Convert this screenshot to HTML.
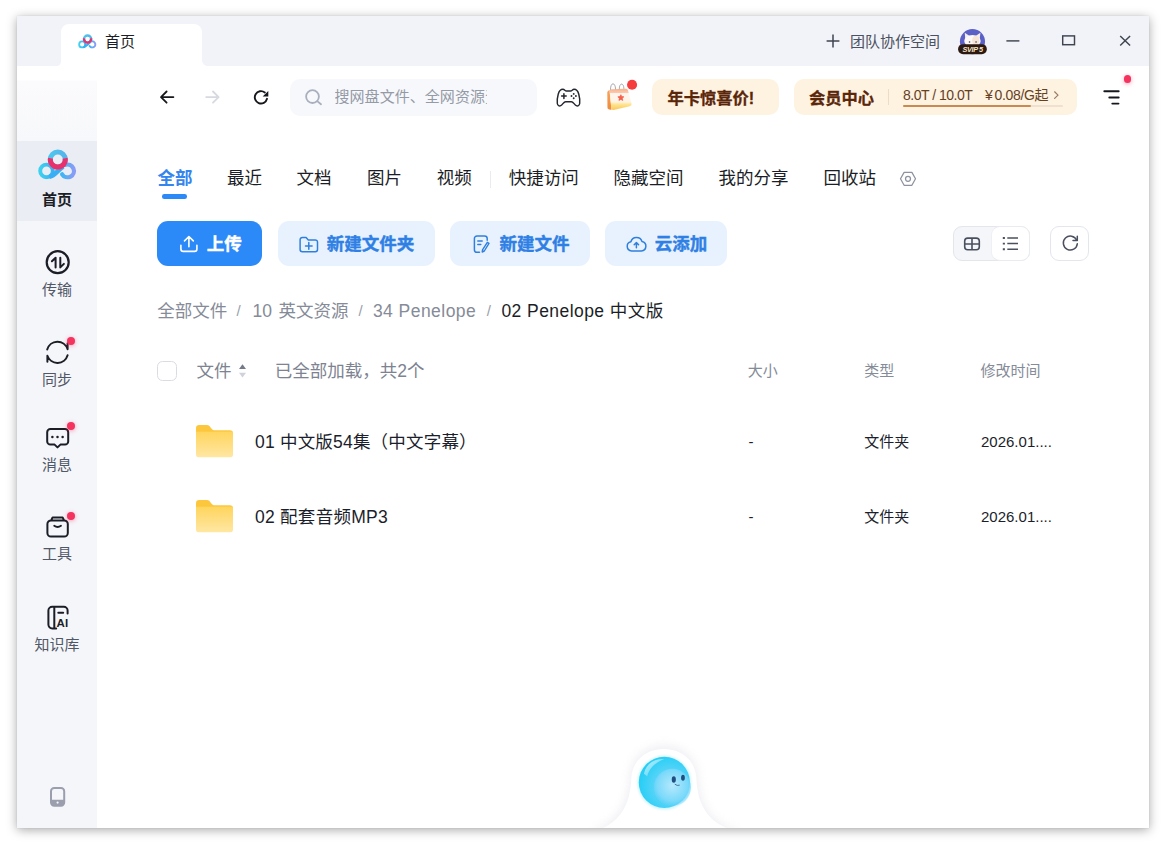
<!DOCTYPE html>
<html lang="zh-CN">
<head>
<meta charset="utf-8">
<title>首页</title>
<style>
*{box-sizing:border-box;margin:0;padding:0}
html,body{width:1169px;height:850px;overflow:hidden;background:#fff}
body{font-family:"Liberation Sans","Noto Sans CJK SC",sans-serif;color:#1b1e26;position:relative}
.abs{position:absolute}
svg{position:absolute;overflow:visible}
#win{position:absolute;left:17px;top:16px;width:1132px;height:812px;background:#fff;box-shadow:0 0 1px rgba(0,0,0,.12),0 1.500px 10px rgba(0,0,0,.34)}
#titlebar{position:absolute;left:0;top:0;width:1132px;height:49.600px;background:#f2f3f8}
#tab{position:absolute;left:43.800px;top:8px;width:141.200px;height:41.600px;background:#fff;border-radius:8px 8px 0 0}
#tab:before,#tab:after{content:"";position:absolute;bottom:0;width:6px;height:6px}
#tab:before{left:-2.500px;width:2.500px;height:2.500px;background:radial-gradient(circle at 0 0,transparent 2px,#fff 3px)}
#tab:after{right:-6px;background:radial-gradient(circle at 100% 0,transparent 5.5px,#fff 6.5px)}
#side{position:absolute;left:0;top:49.600px;width:80px;height:762.400px;background:linear-gradient(#fff 0,#fff 14px,#fbfbfd 15px,#f7f8fb 75px,#f5f6fa 76px,#f5f6fa 100%)}
.t{position:absolute;white-space:nowrap;line-height:20px;height:20px}
.sel{position:absolute;left:0;top:75px;width:80px;height:80px;background:#ebedf4}
.slabel{position:absolute;left:0;width:80px;text-align:center;font-size:15px;line-height:20px;color:#505766}
.dot{position:absolute;width:7.800px;height:7.800px;margin-top:.4px;border-radius:50%;background:#f4335f;box-shadow:0 1px 4px rgba(244,51,95,.45)}
.nav{top:150.600px;font-size:17.500px;line-height:22px;height:22px;color:#1b1e26}
.btn{top:205px;height:45px;border-radius:11px;background:#e8f2fe}
.bt{top:217px;font-size:17.500px;line-height:22px;height:22px;font-weight:700;color:#2f80e4;-webkit-text-stroke:.4px}
.cr{top:284.100px;font-size:17.500px;line-height:22px;height:22px;color:#858b98}
.sl{color:#9aa0ac;font-size:15px}
.hd{top:344.100px;font-size:17.500px;line-height:22px;height:22px;color:#7d8391}
.ch{top:344.500px;font-size:15px;line-height:20px;height:20px;color:#858b98}
.nm{font-size:17.500px;line-height:22px;height:22px;color:#1b1e2b}
.cl{font-size:15px;line-height:20px;height:20px;color:#1b1e2b}
</style>
</head>
<body>
<svg width="0" height="0" style="left:0;top:0">
  <defs>
    <linearGradient id="gR" x1="0" y1="0" x2="1" y2="0"><stop offset="0" stop-color="#3fb6f4"/><stop offset="1" stop-color="#8a9cf5"/></linearGradient>
    <linearGradient id="gL" x1="0" y1="0" x2="1" y2="0"><stop offset="0" stop-color="#3fd0ef"/><stop offset="1" stop-color="#3ab2f2"/></linearGradient>
    <linearGradient id="gT" x1="0" y1="0" x2="1" y2="0"><stop offset="0" stop-color="#4cc6ee"/><stop offset="1" stop-color="#55b4ea"/></linearGradient>
    <linearGradient id="gF" x1="0" y1="0" x2="0" y2="1"><stop offset="0" stop-color="#ffd55e"/><stop offset="1" stop-color="#ffe7a4"/></linearGradient>
    <symbol id="folder" viewBox="0 0 37 32.400">
      <path d="M0 3.200 A3.200 3.200 0 0 1 3.200 0 H10.800 C13 0 13.600 1.200 15 2.900 C16.200 4.400 17 5.200 19.200 5.200 H33.800 A3.200 3.200 0 0 1 37 8.400 V12 H0 Z" fill="#fcc73c"/>
      <path d="M0 6.800 H37 V29.200 A3.200 3.200 0 0 1 33.800 32.400 H3.200 A3.200 3.200 0 0 1 0 29.200 Z" fill="url(#gF)"/>
      <path d="M0 3.200 A3.200 3.200 0 0 1 3.200 0 H10.800 C13 0 13.600 1.200 15 2.900 C16.200 4.400 17 5.200 19.200 5.200 H33.800 A3.200 3.200 0 0 1 37 8.400 V12 H0 Z" fill="#fcc73c" opacity="0"/>
    </symbol>
    <symbol id="logo" viewBox="0 0 38.7 30.6">
      <circle cx="8.5" cy="21.9" r="6.3" fill="none" stroke="url(#gL)" stroke-width="3.9"/>
      <path d="M11.5 27.7 C17.5 26.6 19 21.5 25.2 17.6" fill="none" stroke="#3aaef3" stroke-width="4.6"/>
      <path d="M24.1 25.3 A6.4 6.4 0 1 0 27.3 15.9" fill="none" stroke="url(#gR)" stroke-width="4.2" stroke-linecap="round"/>
      <circle cx="19.8" cy="10.6" r="7.5" fill="none" stroke="url(#gT)" stroke-width="5"/>
      <path d="M27.16 9.17 A7.5 7.5 0 1 1 12.44 9.17" fill="none" stroke="#e8316c" stroke-width="5"/>
    </symbol>
  </defs>
</svg>
<div id="win">
  <!-- ============ TITLE BAR ============ -->
  <div id="titlebar">
    <div id="tab"></div>
    <svg style="left:61px;top:17.6px" width="18.7" height="14.6"><use href="#logo" width="18.7" height="14.6"/></svg>
    <div class="t" style="left:88px;top:16px;font-size:15px;color:#1b1e26">首页</div>
    <svg style="left:0;top:0" width="1132" height="50" fill="none" stroke="#3f444f" stroke-width="1.450">
      <path d="M809.600 25 H822.400 M816 18.600 V31.400" stroke-width="1.500"/>
      <path d="M989.400 24.900 H1002.400"/>
      <rect x="1045.700" y="19.900" width="11.800" height="8.800"/>
      <path d="M1103.200 19.900 L1113.100 29.600 M1113.100 19.900 L1103.200 29.600"/>
    </svg>
    <!-- avatar -->
    <svg style="left:928px;top:4px" width="60" height="40" viewBox="0 0 1169 779">
      <circle cx="535" cy="420" r="245" fill="#5b60c6"/>
      <path d="M395 380 L385 250 L480 310 Z M675 380 L690 250 L595 310 Z" fill="#f3ece8"/>
      <ellipse cx="535" cy="410" rx="160" ry="120" fill="#fbf8f6"/>
      <ellipse cx="600" cy="400" rx="70" ry="95" fill="#f3dccb" opacity=".7"/>
      <circle cx="478" cy="428" r="16" fill="#3a3f55"/><circle cx="605" cy="428" r="16" fill="#3a3f55"/>
      <rect x="255" y="470" width="560" height="197" rx="97" fill="#2c1a12"/>
      <text x="540" y="618" text-anchor="middle" font-family="Liberation Sans, sans-serif" font-weight="700" font-style="italic" font-size="142" letter-spacing="-7" fill="#f8e4c6">SVIP 5</text>
    </svg>
    <div class="t" style="left:833px;top:16px;font-size:15px;color:#4a5160">团队协作空间</div>
  </div>
  <!-- ============ SIDEBAR ============ -->
  <div id="side">
    <div class="sel"></div>
    <svg style="left:20.6px;top:83.4px" width="38.7" height="30.6"><use href="#logo" width="38.7" height="30.6"/></svg>
    <!-- transfer -->
    <svg style="left:0;top:0" width="80" height="762" fill="none" stroke="#1b1e26" stroke-width="2.1" stroke-linecap="round" stroke-linejoin="round">
      <circle cx="40.7" cy="196.2" r="11" stroke-width="2.2"/>
      <path d="M34.9 195.2 L38.6 191.7 V201.4 M43.3 191.7 V201.4 L46.9 197.9" stroke-width="2"/>
      <!-- sync -->
      <path d="M30.2 283.6 A10.6 10.6 0 0 1 50.6 283.2 V277.2 M50.6 289.2 A10.6 10.6 0 0 1 30.4 289.8 V295.8" stroke-width="2"/>
      <!-- message -->
      <path d="M33.4 363 H48 A3.2 3.2 0 0 1 51.2 366.2 V375.4 A3.2 3.2 0 0 1 48 378.6 H43.4 L40.5 381.4 L37.6 378.6 H33.4 A3.2 3.2 0 0 1 30.2 375.4 V366.2 A3.2 3.2 0 0 1 33.4 363 Z" stroke-width="2"/>
      <g fill="#1b1e26" stroke="none"><circle cx="35.4" cy="370.9" r="1.25"/><circle cx="40.5" cy="370.9" r="1.25"/><circle cx="45.6" cy="370.9" r="1.25"/></g>
      <!-- tools -->
      <path d="M34 454.4 H47.2 A3.6 3.6 0 0 1 50.8 458 V467 A3.6 3.6 0 0 1 47.200 470.6 H34 A3.6 3.6 0 0 1 30.4 467 V458 A3.6 3.600 0 0 1 34 454.400 Z M34.200 454.200 L35.600 451.400 H45.600 L47 454.200" stroke-width="2"/>
      <path d="M37.2 459.800 Q40.600 462.200 44 459.800" stroke-width="1.800"/>
      <!-- knowledge -->
      <path d="M50.600 547.600 V544.600 A3.800 3.800 0 0 0 46.800 540.800 H35.200 A3.800 3.800 0 0 0 31.400 544.600 V558.600 A3.800 3.800 0 0 0 35.200 562.400 H39.200 M37.300 540.800 V562.400 M41.300 546.700 H46.200" stroke-width="2"/>
    </svg>
    <div class="abs" style="left:39.400px;top:552.300px;width:14px;font:700 11.500px/11px 'Liberation Sans',sans-serif;color:#1b1e26;letter-spacing:.2px">AI</div>
    <div class="dot" style="left:50.1px;top:270.900px"></div>
    <div class="dot" style="left:49.9px;top:356.300px"></div>
    <div class="dot" style="left:49.9px;top:446.300px"></div>
    <!-- phone -->
    <svg style="left:32.900px;top:721.100px" width="15.2" height="19.800">
      <rect x="1" y="1" width="13.200" height="17.800" rx="3.200" fill="none" stroke="#9b9fad" stroke-width="2"/>
      <path d="M1 12.700 H14.200 V15.600 A3.200 3.200 0 0 1 11 18.800 H4.200 A3.200 3.200 0 0 1 1 15.600 Z" fill="#9b9fad"/>
      <circle cx="7.600" cy="15.600" r="1.100" fill="#f5f6fa"/>
    </svg>
    <div class="slabel" style="top:124px;font-weight:700;color:#1b1e26">首页</div>
    <div class="slabel" style="top:214px">传输</div>
    <div class="slabel" style="top:304px">同步</div>
    <div class="slabel" style="top:389px">消息</div>
    <div class="slabel" style="top:478px">工具</div>
    <div class="slabel" style="top:569px">知识库</div>
  </div>
  <!-- ============ MAIN ============ -->
  <div id="main" class="abs" style="left:0;top:0;width:1132px;height:812px">
    <svg style="left:0;top:50px" width="1132" height="60" fill="none" stroke-linecap="round" stroke-linejoin="round">
      <!-- back / forward / reload  (coords: y offset 50) -->
      <path d="M156.400 31.100 H144.200 M149.600 25.500 L144 31.100 L149.600 36.700" stroke="#15171c" stroke-width="1.800"/>
      <path d="M189.200 31.100 H201.400 M196 25.500 L201.600 31.100 L196 36.700" stroke="#d6d9e0" stroke-width="1.800"/>
      <path d="M247.82 26.41 A6.2 6.2 0 1 0 250.02 32.80" stroke="#15171c" stroke-width="1.900"/>
      <path d="M251.300 24.900 V30.600 H245.700 Z" fill="#15171c" stroke="none"/>
    </svg>
    <div class="abs" style="left:273px;top:63px;width:247px;height:37px;border-radius:10px;background:#f7f8fb"></div>
    <svg style="left:285px;top:70px" width="24" height="24" fill="none" stroke="#a9afbd" stroke-width="1.800" stroke-linecap="round"><circle cx="10.500" cy="10.600" r="6.400"/><path d="M15.500 15.400 L19 18.300"/></svg>
    <div class="t" style="left:317.500px;top:71px;width:152.600px;overflow:hidden;font-size:15px;color:#949aa6;letter-spacing:.05px">搜网盘文件、全网资源资讯</div>
    <!-- gamepad -->
    <svg style="left:538.500px;top:71.600px" width="25" height="19.200" viewBox="0 0 25 19.200" fill="none" stroke="#24272e" stroke-width="1.450" stroke-linecap="round" stroke-linejoin="round">
      <path d="M6.900 1.300 C8.600 1.300 9 3 10.400 3 H14.600 C16 3 16.400 1.300 18.100 1.300 C20.600 1.300 22 3.300 22.800 6.300 C23.600 9.300 24.100 13 23.700 15.500 C23.400 17.600 21.700 18.300 20.300 17.700 C18.300 16.800 17.400 13.700 15.400 13.700 H9.600 C7.600 13.700 6.700 16.800 4.700 17.700 C3.300 18.300 1.600 17.600 1.300 15.500 C0.900 13 1.400 9.300 2.200 6.300 C3 3.300 4.400 1.300 6.900 1.300 Z"/>
      <path d="M5.600 8.100 H10.200 M7.900 5.800 V10.400" stroke-width="1.500"/>
      <g fill="#24272e" stroke="none"><circle cx="17.700" cy="5.900" r=".95"/><circle cx="17.700" cy="10.200" r=".95"/><circle cx="15.500" cy="8.050" r=".95"/><circle cx="19.900" cy="8.050" r=".95"/></g>
    </svg>
    <svg style="left:578px;top:59px" width="50" height="45" viewBox="0 0 944 850">
      <defs>
        <linearGradient id="cF" x1="0" y1="0" x2="0" y2="1"><stop offset="0" stop-color="#f9b088"/><stop offset=".18" stop-color="#fbc9ae"/><stop offset=".22" stop-color="#fff6ef"/><stop offset=".62" stop-color="#fff3e4"/><stop offset=".72" stop-color="#fee692"/><stop offset="1" stop-color="#fbc65a"/></linearGradient>
        <linearGradient id="cS" x1="0" y1="0" x2="0" y2="1"><stop offset="0" stop-color="#f7a45c"/><stop offset="1" stop-color="#ee8a3c"/></linearGradient>
      </defs>
      <path d="M232 330 Q232 295 275 282 L312 655 Q250 660 236 630 Z" fill="url(#cS)"/>
      <path d="M275 300 Q272 272 310 270 L585 262 Q612 262 622 290 L690 540 Q698 580 655 592 L350 662 Q312 668 308 630 Z" fill="url(#cF)"/>
      <path d="M488 372 L505 408 L545 412 L516 440 L524 480 L488 461 L452 480 L460 440 L431 412 L471 408 Z" fill="#f4604c" stroke="#f4604c" stroke-width="14" stroke-linejoin="round"/>
      <path d="M292 270 C292 130 385 130 388 262 M458 262 C458 140 545 140 546 255" fill="none" stroke="#8d8c94" stroke-width="14" stroke-linecap="round"/>
      <circle cx="700" cy="185" r="95" fill="#f53d3d"/>
    </svg>
    <!-- promo 1 -->
    <div class="abs" style="left:635.400px;top:63px;width:126.200px;height:36.400px;border-radius:10px;background:#fef2e1"></div>
    <div class="t" style="left:650.500px;top:71.500px;font-size:16.250px;font-weight:700;-webkit-text-stroke:.3px;color:#5a260a">年卡惊喜价!</div>
    <!-- promo 2 -->
    <div class="abs" style="left:777.200px;top:63px;width:282.600px;height:36.400px;border-radius:10px;background:#fef2e1"></div>
    <div class="t" style="left:792px;top:71.500px;font-size:16.250px;font-weight:700;-webkit-text-stroke:.3px;color:#5a260a">会员中心</div>
    <div class="abs" style="left:871px;top:73px;width:1px;height:16px;background:#efdcc6"></div>
    <div class="t" style="left:886px;top:69px;font-size:14px;letter-spacing:-.5px;color:#65411f">8.0T / 10.0T</div>
    <div class="t" style="left:968px;top:69px;font-size:14px;letter-spacing:-.35px;color:#65411f"><span style="letter-spacing:1.800px">¥</span>0.08/G起</div>
    <svg style="left:1036px;top:74px" width="8" height="11" fill="none" stroke="#9a7b62" stroke-width="1.200" stroke-linecap="round" stroke-linejoin="round"><path d="M1.600 1.800 L5 5.100 L1.600 8.400"/></svg>
    <div class="abs" style="left:886px;top:88.800px;width:159.500px;height:2px;border-radius:1px;background:#efe0cf"></div>
    <div class="abs" style="left:886px;top:88.800px;width:128px;height:2px;border-radius:1px;background:#c88a52"></div>
    <!-- hamburger -->
    <svg style="left:1080px;top:66px" width="30" height="30" fill="none" stroke="#15171c" stroke-width="1.900" stroke-linecap="round"><path d="M7.300 9.300 H21.700 M12.300 15.500 H21.700 M15.300 21.600 H21.500"/></svg>
    <div class="dot" style="left:1106.600px;top:58.800px;width:7.800px;height:7.800px"></div>
    <div class="t nav" style="left:140.500px;color:#3485ee;font-weight:700">全部</div>
    <div class="abs" style="left:145.200px;top:178.200px;width:24.600px;height:4.600px;border-radius:2.300px;background:#2b8af7"></div>
    <div class="t nav" style="left:210px">最近</div>
    <div class="t nav" style="left:279.500px">文档</div>
    <div class="t nav" style="left:350px">图片</div>
    <div class="t nav" style="left:419.800px">视频</div>
    <div class="abs" style="left:473.400px;top:155px;width:1px;height:17px;background:#e9ebf0"></div>
    <div class="t nav" style="left:491.800px">快捷访问</div>
    <div class="t nav" style="left:596.500px">隐藏空间</div>
    <div class="t nav" style="left:701.500px">我的分享</div>
    <div class="t nav" style="left:806.600px">回收站</div>
    <svg style="left:0;top:0" width="1132" height="200" fill="none" stroke="#8d929e" stroke-width="1.250" stroke-linejoin="round"><path d="M883.500 162.800 L887.100 156.400 H894.900 L898.500 162.800 L894.900 169.300 H887.100 Z"/><circle cx="891" cy="162.800" r="2.500"/></svg>
    <div class="abs btn" style="left:140px;width:105px;background:#2b8af8"></div>
    <svg style="left:162px;top:219px" width="20" height="18" fill="none" stroke="#fff" stroke-width="1.600" stroke-linecap="round" stroke-linejoin="round"><path d="M1.900 10.200 V14 A2.400 2.400 0 0 0 4.300 16.400 H15.500 A2.400 2.400 0 0 0 17.900 14 V10.200 M9.900 11.800 V1.600 M5.500 5.900 L9.900 1.500 L14.300 5.900"/></svg>
    <div class="t bt" style="left:189.700px;color:#fff">上传</div>
    <div class="abs btn" style="left:260.500px;width:157.300px"></div>
    <svg style="left:282px;top:219.500px" width="20" height="18" fill="none" stroke="#2f80dc" stroke-width="1.500" stroke-linecap="round" stroke-linejoin="round"><path d="M1.100 3.700 A2.200 2.200 0 0 1 3.300 1.500 H7.100 L9.300 3.900 H16.300 A2.200 2.200 0 0 1 18.500 6.100 V13.600 A2.200 2.200 0 0 1 16.300 15.800 H3.300 A2.200 2.200 0 0 1 1.100 13.600 Z M6.500 9.900 H13.100 M9.800 6.600 V13.200"/></svg>
    <div class="t bt" style="left:309.700px">新建文件夹</div>
    <div class="abs btn" style="left:432.800px;width:139.800px"></div>
    <svg style="left:456px;top:219px" width="18" height="19" fill="none" stroke="#2f80dc" stroke-width="1.500" stroke-linecap="round" stroke-linejoin="round"><path d="M6.500 17.300 H4 A2.600 2.600 0 0 1 1.400 14.700 V3.600 A2.600 2.600 0 0 1 4 1 H11.600 A2.600 2.600 0 0 1 14.200 3.600 V5.200 M4.800 6 H9.200 M4.800 9.500 H7.800"/><path d="M14.300 7.300 L16 8.400 L11.300 16 L9.200 17 L9.500 14.900 Z" stroke-width="1.400"/></svg>
    <div class="t bt" style="left:482.600px">新建文件</div>
    <div class="abs btn" style="left:588px;width:121.700px"></div>
    <svg style="left:608.500px;top:218.900px" width="21" height="17" fill="none" stroke="#2f80dc" stroke-width="1.500" stroke-linecap="round" stroke-linejoin="round"><path d="M5.600 15.900 A4.600 4.600 0 0 1 4.900 6.800 A5.800 5.800 0 0 1 16 6.400 A4.800 4.800 0 0 1 15.400 15.900 Z M10.400 12.700 V7.700 M8.200 9.700 L10.400 7.500 L12.600 9.700"/></svg>
    <div class="t bt" style="left:637.700px">云添加</div>
    <!-- view toggle -->
    <div class="abs" style="left:936px;top:210px;width:77px;height:35px;border-radius:9px;border:1px solid #e4e6ec;background:#f5f6fa"></div>
    <div class="abs" style="left:973.500px;top:210px;width:39.500px;height:35px;border-radius:9px;border:1px solid #e9ebf0;border-left-color:#eef0f4;background:#fff"></div>
    <svg style="left:946px;top:220px" width="18" height="16" fill="none" stroke="#4a505e" stroke-width="1.600" stroke-linejoin="round"><rect x="1.700" y="2.100" width="14.600" height="11.700" rx="3"/><path d="M9 2.100 V13.800 M1.700 7.950 H16.300"/></svg>
    <svg style="left:984px;top:219px" width="18" height="18" fill="none" stroke="#4a505e" stroke-width="1.500" stroke-linecap="butt"><path d="M6.300 3 H17 M6.300 8.600 H17 M6.300 14.200 H17"/><path d="M1.800 3 H3.900 M1.800 8.600 H3.900 M1.800 14.200 H3.900" stroke-width="1.900"/></svg>
    <div class="abs" style="left:1033.200px;top:210px;width:39.200px;height:35px;border-radius:9px;border:1px solid #e4e6ec;background:#fff"></div>
    <svg style="left:1044px;top:218px" width="19" height="19" fill="none" stroke="#4a505e" stroke-width="1.500" stroke-linecap="round" stroke-linejoin="round"><path d="M15.700 6.100 A7 7 0 1 0 16.300 9.800"/><path d="M16.300 2.200 V6.500 H12" /></svg>
    <div class="t cr" style="left:140.200px">全部文件</div>
    <div class="t cr sl" style="left:219.500px">/</div>
    <div class="t cr" style="left:235.600px;word-spacing:1.600px">10 英文资源</div>
    <div class="t cr sl" style="left:341.500px">/</div>
    <div class="t cr" style="left:355.900px;letter-spacing:.46px">34 Penelope</div>
    <div class="t cr sl" style="left:469.800px">/</div>
    <div class="t cr" style="left:484.400px;color:#1b1e26;letter-spacing:.44px">02 Penelope 中文版</div>
    <div class="abs" style="left:140.100px;top:345.300px;width:19.600px;height:19.600px;border-radius:5.500px;border:1px solid #d9dce3;background:#fff"></div>
    <div class="t hd" style="left:179.600px">文件</div>
    <svg style="left:221px;top:347px" width="9" height="16"><path d="M4.500 1.200 L8 5.900 H1 Z" fill="#747a88"/><path d="M4.500 14.400 L8 9.700 H1 Z" fill="#cfd2d9"/></svg>
    <div class="t hd" style="left:257.800px">已全部加载，共2个</div>
    <div class="t ch" style="left:730.700px">大小</div>
    <div class="t ch" style="left:847.200px">类型</div>
    <div class="t ch" style="left:963.500px">修改时间</div>
    <!-- row 1 -->
    <svg style="left:179px;top:408.800px" width="37" height="32.400"><use href="#folder"/></svg>
    <div class="t nm" style="left:238px;top:414.500px;letter-spacing:.2px">01 中文版54集（中文字幕）</div>
    <div class="t cl" style="left:731.600px;top:416px">-</div>
    <div class="t cl" style="left:847.200px;top:416px">文件夹</div>
    <div class="t cl" style="left:964px;top:416px">2026.01....</div>
    <!-- row 2 -->
    <svg style="left:179px;top:483.800px" width="37" height="32.400"><use href="#folder"/></svg>
    <div class="t nm" style="left:238px;top:489.500px;letter-spacing:.26px">02 配套音频MP3</div>
    <div class="t cl" style="left:731.600px;top:491px">-</div>
    <div class="t cl" style="left:847.200px;top:491px">文件夹</div>
    <div class="t cl" style="left:964px;top:491px">2026.01....</div>
    <div class="abs" style="left:563px;top:714px;width:170px;height:98px;overflow:hidden">
    <svg style="left:0;top:0" width="170" height="110" viewBox="0 0 1169 756">
      <defs>
        <filter id="bs2" x="-20%" y="-20%" width="140%" height="140%"><feGaussianBlur stdDeviation="9"/></filter>
        <filter id="bs" x="-20%" y="-20%" width="140%" height="140%"><feGaussianBlur stdDeviation="28"/></filter>
        <radialGradient id="bg1" cx=".62" cy=".58" r=".62"><stop offset="0" stop-color="#a8e6fc"/><stop offset=".45" stop-color="#5cd4f8"/><stop offset="1" stop-color="#26cef5"/></radialGradient>
        <radialGradient id="bg2" cx=".5" cy=".45" r=".6"><stop offset="0" stop-color="#b5e9fd"/><stop offset=".7" stop-color="#7ad9fa"/><stop offset="1" stop-color="#5dd0f8" stop-opacity="0"/></radialGradient>
        <linearGradient id="bg3" x1="0" y1="0" x2="1" y2="1"><stop offset="0" stop-color="#fff" stop-opacity=".75"/><stop offset="1" stop-color="#fff" stop-opacity="0"/></linearGradient>
      </defs>
      <path d="M60 700 C250 640 320 520 338 330 C352 28 800 28 817 330 C830 520 900 640 1110 700 Z" fill="#cfd0dc" opacity=".30" filter="url(#bs)"/>
      <path d="M90 700 C290 640 345 500 353 330 C366 64 786 64 800 330 C808 500 865 640 1080 700 Z" fill="#fff"/>
      <circle cx="580" cy="362" r="186" fill="#7fe0fb" opacity=".35" filter="url(#bs2)"/>
      <circle cx="580" cy="360" r="176" fill="url(#bg1)"/>
      <circle cx="635" cy="395" r="128" fill="url(#bg2)"/>
      <path d="M440 300 C455 225 520 195 580 200 C520 225 480 255 462 318 Z" fill="url(#bg3)"/>
      <ellipse cx="645" cy="340" rx="14" ry="22" fill="#1f4f80"/>
      <ellipse cx="708" cy="328" rx="13" ry="21" fill="#1f4f80"/>
      <path d="M654 374 Q668 386 683 380" fill="none" stroke="#1f4f80" stroke-width="5" stroke-linecap="round"/>
    </svg>
    </div>
  </div>
</div>
</body>
</html>
